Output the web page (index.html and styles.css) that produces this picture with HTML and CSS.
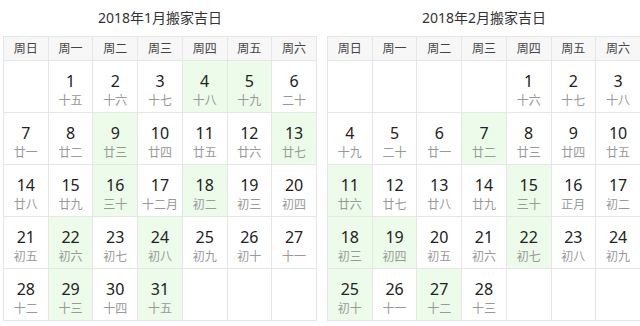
FILE: index.html
```html
<!DOCTYPE html>
<html lang="zh-CN">
<head>
<meta charset="utf-8">
<title>搬家吉日</title>
<link rel="stylesheet" href="styles.css">
</head>
<body>
<div class="wrap">
  <section class="cal">
    <h2 class="title">2018年1月搬家吉日</h2>
    <table class="grid">
      <thead>
        <tr><th>周日</th><th>周一</th><th>周二</th><th>周三</th><th>周四</th><th>周五</th><th>周六</th></tr>
      </thead>
      <tbody>
        <tr>
          <td></td>
          <td><b>1</b><i>十五</i></td>
          <td><b>2</b><i>十六</i></td>
          <td><b>3</b><i>十七</i></td>
          <td class="ji"><b>4</b><i>十八</i></td>
          <td class="ji"><b>5</b><i>十九</i></td>
          <td><b>6</b><i>二十</i></td>
        </tr>
        <tr>
          <td><b>7</b><i>廿一</i></td>
          <td><b>8</b><i>廿二</i></td>
          <td class="ji"><b>9</b><i>廿三</i></td>
          <td><b>10</b><i>廿四</i></td>
          <td><b>11</b><i>廿五</i></td>
          <td><b>12</b><i>廿六</i></td>
          <td class="ji"><b>13</b><i>廿七</i></td>
        </tr>
        <tr>
          <td><b>14</b><i>廿八</i></td>
          <td><b>15</b><i>廿九</i></td>
          <td class="ji"><b>16</b><i>三十</i></td>
          <td><b>17</b><i>十二月</i></td>
          <td class="ji"><b>18</b><i>初二</i></td>
          <td><b>19</b><i>初三</i></td>
          <td><b>20</b><i>初四</i></td>
        </tr>
        <tr>
          <td><b>21</b><i>初五</i></td>
          <td class="ji"><b>22</b><i>初六</i></td>
          <td><b>23</b><i>初七</i></td>
          <td class="ji"><b>24</b><i>初八</i></td>
          <td><b>25</b><i>初九</i></td>
          <td><b>26</b><i>初十</i></td>
          <td><b>27</b><i>十一</i></td>
        </tr>
        <tr>
          <td><b>28</b><i>十二</i></td>
          <td class="ji"><b>29</b><i>十三</i></td>
          <td><b>30</b><i>十四</i></td>
          <td class="ji"><b>31</b><i>十五</i></td>
          <td></td>
          <td></td>
          <td></td>
        </tr>
      </tbody>
    </table>
  </section>
  <section class="cal">
    <h2 class="title">2018年2月搬家吉日</h2>
    <table class="grid">
      <thead>
        <tr><th>周日</th><th>周一</th><th>周二</th><th>周三</th><th>周四</th><th>周五</th><th>周六</th></tr>
      </thead>
      <tbody>
        <tr>
          <td></td>
          <td></td>
          <td></td>
          <td></td>
          <td><b>1</b><i>十六</i></td>
          <td><b>2</b><i>十七</i></td>
          <td><b>3</b><i>十八</i></td>
        </tr>
        <tr>
          <td><b>4</b><i>十九</i></td>
          <td><b>5</b><i>二十</i></td>
          <td><b>6</b><i>廿一</i></td>
          <td class="ji"><b>7</b><i>廿二</i></td>
          <td><b>8</b><i>廿三</i></td>
          <td><b>9</b><i>廿四</i></td>
          <td><b>10</b><i>廿五</i></td>
        </tr>
        <tr>
          <td class="ji"><b>11</b><i>廿六</i></td>
          <td><b>12</b><i>廿七</i></td>
          <td><b>13</b><i>廿八</i></td>
          <td><b>14</b><i>廿九</i></td>
          <td class="ji"><b>15</b><i>三十</i></td>
          <td><b>16</b><i>正月</i></td>
          <td><b>17</b><i>初二</i></td>
        </tr>
        <tr>
          <td class="ji"><b>18</b><i>初三</i></td>
          <td class="ji"><b>19</b><i>初四</i></td>
          <td><b>20</b><i>初五</i></td>
          <td><b>21</b><i>初六</i></td>
          <td class="ji"><b>22</b><i>初七</i></td>
          <td><b>23</b><i>初八</i></td>
          <td><b>24</b><i>初九</i></td>
        </tr>
        <tr>
          <td class="ji"><b>25</b><i>初十</i></td>
          <td><b>26</b><i>十一</i></td>
          <td class="ji"><b>27</b><i>十二</i></td>
          <td><b>28</b><i>十三</i></td>
          <td></td>
          <td></td>
          <td></td>
        </tr>
      </tbody>
    </table>
  </section>
</div>
</body>
</html>
```
FILE: styles.css
```css
html, body {
  margin: 0;
  padding: 0;
  background: #fff;
}
body {
  font-family: "Noto Sans", "Noto Sans CJK SC", sans-serif;
  color: #333;
}
.wrap {
  display: flex;
  gap: 10px;
  padding-left: 3px;
}
.cal {
  width: 314px;
}
.title {
  margin: 0;
  height: 36px;
  line-height: 36px;
  font-size: 14px;
  font-weight: normal;
  text-align: center;
  color: #333;
}
.grid {
  width: 314px;
  table-layout: fixed;
  border-collapse: collapse;
}
.grid th,
.grid td {
  border: 1px solid #e6e6e6;
  padding: 0;
  text-align: center;
}
.grid th {
  height: 23px;
  background: #f7f7f7;
  font-size: 12px;
  font-weight: normal;
  color: #444;
  line-height: 23px;
}
.grid td {
  height: 52px;
  vertical-align: top;
  box-sizing: border-box;
  padding-top: 10px;
}
.grid td.ji {
  background: #edfbea;
}
.grid b {
  display: block;
  font-weight: normal;
  font-size: 16px;
  line-height: 20px;
  color: #222;
}
.grid i {
  display: block;
  font-style: normal;
  font-size: 12px;
  line-height: 20px;
  color: #999;
}
```
